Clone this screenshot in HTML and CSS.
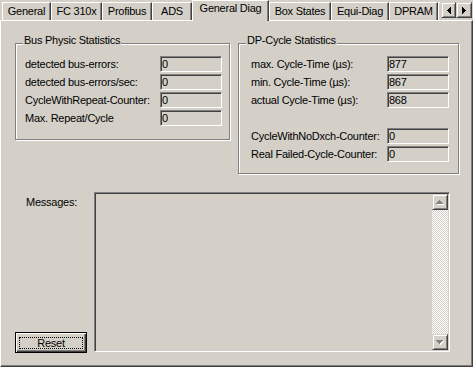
FILE: index.html
```html
<!DOCTYPE html>
<html lang="en">
<head>
    <meta charset="UTF-8">
    <title>General Diag</title>
    <link rel="stylesheet" href="styles.css">
</head>
<body>
    <div class="dialog">
        <div class="tabbar">
            <div class="tabs">
                <div class="tab tab-general">General</div>
                <div class="tab tab-fc">FC 310x</div>
                <div class="tab tab-profibus">Profibus</div>
                <div class="tab tab-ads">ADS</div>
                <div class="tab tab-diag active">General Diag</div>
                <div class="tab tab-box">Box States</div>
                <div class="tab tab-equi">Equi-Diag</div>
                <div class="tab tab-dpram">DPRAM</div>
                <div class="tab tab-more"></div>
            </div>
            <div class="tab-scroll">
                <div class="scroll-btn scroll-left">
                    <svg width="4" height="7" viewBox="0 0 4 7" shape-rendering="crispEdges">
                        <rect x="0" y="3" width="1" height="1" fill="#000"/>
                        <rect x="1" y="2" width="1" height="3" fill="#000"/>
                        <rect x="2" y="1" width="1" height="5" fill="#000"/>
                        <rect x="3" y="0" width="1" height="7" fill="#000"/>
                    </svg>
                </div>
                <div class="scroll-btn scroll-right">
                    <svg width="4" height="7" viewBox="0 0 4 7" shape-rendering="crispEdges">
                        <rect x="0" y="0" width="1" height="7" fill="#000"/>
                        <rect x="1" y="1" width="1" height="5" fill="#000"/>
                        <rect x="2" y="2" width="1" height="3" fill="#000"/>
                        <rect x="3" y="3" width="1" height="1" fill="#000"/>
                    </svg>
                </div>
            </div>
        </div>

        <div class="panel">
            <div class="groups">
                <div class="group group-bus">
                    <span class="group-title">Bus Physic Statistics</span>
                    <div class="row"><span class="label">detected bus-errors:</span><span class="field">0</span></div>
                    <div class="row"><span class="label">detected bus-errors/sec:</span><span class="field">0</span></div>
                    <div class="row"><span class="label">CycleWithRepeat-Counter:</span><span class="field">0</span></div>
                    <div class="row"><span class="label">Max. Repeat/Cycle</span><span class="field">0</span></div>
                </div>
                <div class="group group-cycle">
                    <span class="group-title">DP-Cycle Statistics</span>
                    <div class="row"><span class="label">max. Cycle-Time (µs):</span><span class="field">877</span></div>
                    <div class="row"><span class="label">min. Cycle-Time (µs):</span><span class="field">867</span></div>
                    <div class="row"><span class="label">actual Cycle-Time (µs):</span><span class="field">868</span></div>
                    <div class="row row-gap"><span class="label">CycleWithNoDxch-Counter:</span><span class="field">0</span></div>
                    <div class="row"><span class="label">Real Failed-Cycle-Counter:</span><span class="field">0</span></div>
                </div>
            </div>

            <div class="messages">
                <div class="messages-side">
                    <span class="messages-label">Messages:</span>
                    <button class="reset" type="button"><span class="focus">Reset</span></button>
                </div>
                <div class="listbox">
                    <div class="list-area"></div>
                    <div class="vscroll">
                        <div class="sb-btn">
                            <svg width="8" height="5" viewBox="0 0 8 5" shape-rendering="crispEdges">
                                <g fill="#fff" transform="translate(1,1)">
                                    <rect x="3" y="0" width="1" height="1"/>
                                    <rect x="2" y="1" width="3" height="1"/>
                                    <rect x="1" y="2" width="5" height="1"/>
                                    <rect x="0" y="3" width="7" height="1"/>
                                </g>
                                <g fill="#808080">
                                    <rect x="3" y="0" width="1" height="1"/>
                                    <rect x="2" y="1" width="3" height="1"/>
                                    <rect x="1" y="2" width="5" height="1"/>
                                    <rect x="0" y="3" width="7" height="1"/>
                                </g>
                            </svg>
                        </div>
                        <div class="sb-track"></div>
                        <div class="sb-btn">
                            <svg width="8" height="5" viewBox="0 0 8 5" shape-rendering="crispEdges">
                                <g fill="#fff" transform="translate(1,1)">
                                    <rect x="0" y="0" width="7" height="1"/>
                                    <rect x="1" y="1" width="5" height="1"/>
                                    <rect x="2" y="2" width="3" height="1"/>
                                    <rect x="3" y="3" width="1" height="1"/>
                                </g>
                                <g fill="#808080">
                                    <rect x="0" y="0" width="7" height="1"/>
                                    <rect x="1" y="1" width="5" height="1"/>
                                    <rect x="2" y="2" width="3" height="1"/>
                                    <rect x="3" y="3" width="1" height="1"/>
                                </g>
                            </svg>
                        </div>
                    </div>
                </div>
            </div>
        </div>
    </div>
</body>
</html>
```

FILE: styles.css
```css
body {
    margin: 0;
    background: #d4d0c8;
    color: #000;
    font-family: "Liberation Sans", Arial, sans-serif;
    font-size: 11px;
    line-height: 13px;
    letter-spacing: -0.25px;
}

.dialog {
    width: 473px;
    height: 367px;
    overflow: hidden;
}

/* tab strip */
.tabbar {
    display: flex;
    height: 21px;
    margin-bottom: -1px;
    position: relative;
    z-index: 1;
}
.tabs {
    display: flex;
    align-items: flex-start;
    flex: none;
    width: 440px;
    padding-left: 2px;
    box-sizing: border-box;
    overflow: hidden;
}
.tab {
    flex: none;
    box-sizing: border-box;
    height: 18px;
    margin-top: 2px;
    padding-top: 2px;
    border-top: 1px solid #fff;
    border-left: 1px solid #fff;
    border-right: 1px solid #404040;
    box-shadow: inset -1px 0 #808080;
    text-align: center;
    white-space: nowrap;
}
.tab.active {
    height: 21px;
    margin-top: 0;
    padding-top: 1px;
    background: #d4d0c8;
}
.tab-general { width: 49px; }
.tab-fc { width: 51px; }
.tab-profibus { width: 50px; }
.tab-ads { width: 40px; }
.tab-diag { width: 77px; }
.tab-box { width: 62px; }
.tab-equi { width: 58px; }
.tab-dpram { width: 49px; }
.tab-more { width: 40px; }

.tab-scroll {
    display: flex;
    margin-top: 2px;
    margin-left: 1px;
}
.scroll-btn {
    box-sizing: border-box;
    height: 16px;
    display: flex;
    align-items: center;
    justify-content: center;
    border: 1px solid;
    border-color: #d4d0c8 #404040 #404040 #d4d0c8;
    box-shadow: inset 1px 1px #fff, inset -1px -1px #808080;
}
.scroll-left { width: 15px; }
.scroll-right { width: 16px; }

/* page body */
.panel {
    box-sizing: border-box;
    width: 473px;
    height: 347px;
    border: 1px solid;
    border-color: #fff #404040 #404040 #fff;
    box-shadow: inset -1px -1px #808080;
}

.groups {
    display: flex;
    align-items: flex-start;
    gap: 8px;
    margin-top: 22px;
    padding-left: 14px;
}
.group {
    position: relative;
    box-sizing: border-box;
    display: flex;
    flex-direction: column;
    gap: 2px;
    padding-top: 12px;
    border: 1px solid #808080;
    box-shadow: 1px 1px #fff, inset 1px 1px #fff;
}
.group-bus {
    width: 215px;
    height: 97px;
    padding-left: 9px;
    padding-right: 7px;
}
.group-cycle {
    width: 221px;
    height: 131px;
    padding-left: 12px;
    padding-right: 9px;
}
.group-title {
    position: absolute;
    top: -10px;
    left: 7px;
    padding: 0 1px;
    background: #d4d0c8;
}

.row {
    display: flex;
    justify-content: space-between;
    align-items: center;
    height: 16px;
}
.row-gap {
    margin-top: 18px;
}
.label {
    white-space: nowrap;
    padding-top: 1px;
}
.field {
    box-sizing: border-box;
    width: 62px;
    height: 16px;
    padding-left: 1px;
    line-height: 14px;
    border: 1px solid;
    border-color: #808080 #fff #fff #808080;
    box-shadow: inset 1px 1px #404040;
}

/* messages */
.messages {
    display: flex;
    margin-top: 18px;
    height: 160px;
}
.messages-side {
    width: 93px;
    display: flex;
    flex-direction: column;
    justify-content: space-between;
    align-items: flex-start;
}
.messages-label {
    align-self: stretch;
    margin-top: 4px;
    padding-right: 17px;
    text-align: right;
}
.reset {
    box-sizing: border-box;
    width: 72px;
    height: 21px;
    margin: 0 0 -1px 14px;
    padding: 3px;
    background: #d4d0c8;
    border: 1px solid #000;
    border-radius: 0;
    box-shadow: inset 1px 1px #fff, inset -1px -1px #404040, inset -2px -2px #808080;
    font: inherit;
    letter-spacing: inherit;
    color: #000;
}
.reset .focus {
    display: block;
    box-sizing: border-box;
    height: 12px;
    border: 1px dotted #000;
    line-height: 10px;
    text-align: center;
}

.listbox {
    box-sizing: border-box;
    width: 356px;
    height: 160px;
    padding: 1px;
    display: flex;
    border: 1px solid;
    border-color: #808080 #fff #fff #808080;
    box-shadow: inset 1px 1px #404040;
}
.list-area {
    flex: 1;
}
.vscroll {
    width: 16px;
    display: flex;
    flex-direction: column;
}
.sb-btn {
    box-sizing: border-box;
    height: 16px;
    display: flex;
    align-items: center;
    justify-content: center;
    border: 1px solid;
    border-color: #d4d0c8 #404040 #404040 #d4d0c8;
    box-shadow: inset 1px 1px #fff, inset -1px -1px #808080;
}
.sb-track {
    flex: 1;
    background-image: conic-gradient(#fff 25%, #d4d0c8 0 50%, #fff 0 75%, #d4d0c8 0);
    background-size: 2px 2px;
}
```
